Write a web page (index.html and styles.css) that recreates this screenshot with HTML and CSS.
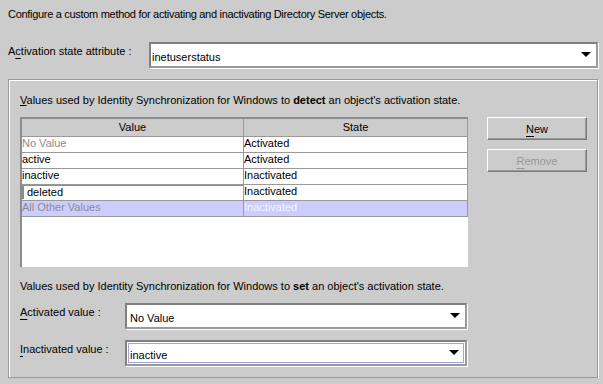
FILE: index.html
```html
<!DOCTYPE html>
<html lang="en">
<head>
  <meta charset="UTF-8" />
  <title>Activation method</title>
  <link rel="stylesheet" href="styles.css">
</head>
<body>

  <div class="intro">Configure a custom method for activating and inactivating Directory Server objects.</div>

  <div class="field-row">
    <label class="field-label wide">A<u>c</u>tivation state attribute :</label>
    <div class="combo combo-top">
      <span class="combo-text">inetuserstatus</span>
      <span class="arrow"></span>
    </div>
  </div>

  <div class="panel">
    <div class="panel-text"><u class="near">V</u>alues used by Identity Synchronization for Windows to <b>detect</b> an object's activation state.</div>

    <div class="table-row">
      <div class="table-wrap">
        <table class="grid">
          <thead>
            <tr><th class="col-value">Value</th><th class="col-state">State</th></tr>
          </thead>
          <tbody>
            <tr><td class="muted">No Value</td><td>Activated</td></tr>
            <tr><td>active</td><td>Activated</td></tr>
            <tr><td>inactive</td><td>Inactivated</td></tr>
            <tr><td class="editing"><div class="editor">deleted</div></td><td>Inactivated</td></tr>
            <tr class="selected"><td class="muted">All Other Values</td><td class="light">Inactivated</td></tr>
          </tbody>
        </table>
      </div>

      <div class="buttons">
        <button class="btn"><u>N</u>ew</button>
        <button class="btn" disabled><u>R</u>emove</button>
      </div>
    </div>

    <div class="panel-text second">Values used by Identity Synchronization for Windows to <b>set</b> an object's activation state.</div>

    <div class="field-row inner">
      <label class="field-label"><u>A</u>ctivated value :</label>
      <div class="combo combo-small">
        <span class="combo-text">No Value</span>
        <span class="arrow"></span>
      </div>
    </div>

    <div class="field-row inner last">
      <label class="field-label"><u>I</u>nactivated value :</label>
      <div class="combo combo-small focused">
        <span class="combo-text">inactive</span>
        <span class="arrow"></span>
      </div>
    </div>
  </div>

</body>
</html>
```

FILE: styles.css
```css
body {
  margin: 0;
  padding: 0 0 0 8px;
  background: #cccccc;
  font-family: "Liberation Sans", Arial, sans-serif;
  font-size: 11px;
  line-height: 14px;
  color: #000;
}

u {
  text-decoration-thickness: 1px;
  text-underline-offset: 3px;
}

u.near {
  text-underline-offset: 1px;
}

.intro {
  padding-top: 7px;
  height: 14px;
  white-space: nowrap;
  letter-spacing: -0.3px;
}

/* label + combo rows */
.field-row {
  display: flex;
  align-items: flex-start;
  margin-top: 21px;
}

.field-label {
  width: 141px;
  flex: none;
  margin-top: 2px;
  white-space: nowrap;
}

.combo {
  box-sizing: border-box;
  height: 26px;
  display: flex;
  align-items: center;
  background: #fff;
  border: 2px solid;
  border-color: #808080 #9a9a9a #9a9a9a #808080;
  box-shadow: 1px 1px 0 #fff;
}

.combo-top {
  width: 449px;
  padding-left: 1px;
}

.combo-text {
  flex: 1;
  padding-top: 3px;
}

.arrow {
  width: 0;
  height: 0;
  border-left: 5px solid transparent;
  border-right: 5px solid transparent;
  border-top: 5px solid #000;
  margin-right: 5px;
  margin-top: -1px;
}

/* group box */
.panel {
  box-sizing: border-box;
  width: 590px;
  margin-top: 11px;
  padding: 13px 0 11px 11px;
  border: 1px solid #999;
  box-shadow: 1px 1px 0 #fff, inset 1px 1px 0 #fff;
}

.panel-text {
  height: 14px;
  white-space: nowrap;
}

.panel-text.second {
  margin-top: 12px;
}

.table-row {
  display: flex;
  gap: 19px;
  margin-top: 10px;
}

.table-wrap {
  box-sizing: border-box;
  width: 448px;
  height: 150px;
  background: #fff;
  border-top: 2px solid #8c8c8c;
  border-left: 2px solid #8c8c8c;
}

.grid {
  width: 446px;
  border-collapse: collapse;
  table-layout: fixed;
}

.grid th {
  height: 17px;
  padding: 0;
  background: #cccccc;
  font-weight: normal;
  line-height: 17px;
  text-align: center;
  border-right: 1px solid #999;
  border-bottom: 1px solid #999;
}

.col-value {
  width: 221px;
}

.grid td {
  height: 15px;
  padding: 0;
  line-height: 12px;
  vertical-align: top;
  white-space: nowrap;
  border-right: 1px solid #999;
  border-bottom: 1px solid #999;
}

.grid td.muted {
  color: #8c8c8c;
}

.grid td.light {
  color: #f4f4ff;
}

.grid tr.selected td {
  background: #ccccff;
}

.editor {
  box-sizing: border-box;
  height: 15px;
  padding-left: 3px;
  border-top: 2px solid #8c8c8c;
  border-left: 2px solid #8c8c8c;
  line-height: 12px;
  margin-top: -1px;
  background: #fff;
}

.buttons {
  display: flex;
  flex-direction: column;
  gap: 9px;
}

.btn {
  box-sizing: border-box;
  width: 100px;
  height: 23px;
  padding: 0;
  background: #cccccc;
  font-family: inherit;
  font-size: 11px;
  line-height: 14px;
  color: #000;
  border: 1px solid;
  border-color: #fff #7a7a7a #7a7a7a #fff;
  box-shadow: inset -1px -1px 0 #999;
  border-radius: 0;
}

.btn:disabled {
  color: #999;
}

/* bottom rows inside the group box */
.field-row.inner {
  margin-top: 10px;
}

.field-row.inner.last {
  margin-top: 11px;
}

.field-row.inner .field-label {
  width: 105px;
}

.combo-small {
  width: 342px;
  padding-left: 3px;
}

.combo.focused {
  position: relative;
  padding: 1px;
}

.combo.focused .combo-text {
  padding-left: 2px;
}

.combo.focused::after {
  content: "";
  position: absolute;
  left: 1px;
  top: 1px;
  right: 1px;
  bottom: 1px;
  border: 1px solid #a4a4e0;
}
```
